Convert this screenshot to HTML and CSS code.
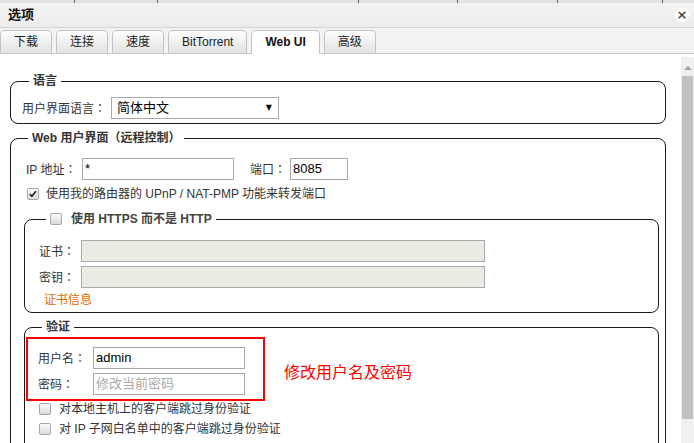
FILE: index.html
```html
<!DOCTYPE html>
<html>
<head>
<meta charset="utf-8">
<title>选项</title>
<link rel="stylesheet" href="styles.css">
</head>
<body>
<div class="window">
  <div class="bgstrip">
    <span class="c1"></span><span class="c2"></span><span class="c3"></span><span class="c4"></span><span class="c5"></span><span class="c6"></span>
  </div>
  <div class="titlebar">
    <span class="title">选项</span>
    <span class="close">×</span>
  </div>
  <div class="tabs">
    <div class="tab">下载</div>
    <div class="tab">连接</div>
    <div class="tab">速度</div>
    <div class="tab">BitTorrent</div>
    <div class="tab active">Web UI</div>
    <div class="tab">高级</div>
  </div>
  <div class="main">
    <div class="content">
      <fieldset class="fs fs-lang">
        <legend>语言</legend>
        <div class="row">
          <span class="lbl w-lang">用户界面语言<span class="colon">：</span></span>
          <div class="select"><span>简体中文</span><span class="arrow">▼</span></div>
        </div>
      </fieldset>

      <fieldset class="fs fs-web">
        <legend>Web 用户界面（远程控制）</legend>
        <div class="row">
          <span class="lbl w-ip">IP 地址<span class="colon">：</span></span>
          <div class="input w-ipin">*</div>
          <span class="lbl w-port">端口<span class="colon">：</span></span>
          <div class="input w-portin">8085</div>
        </div>
        <div class="checkrow upnp">
          <span class="cb checked"><svg viewBox="0 0 12 12" width="10" height="10"><path d="M2.2 6.2 L4.6 8.8 L9.6 2.6" fill="none" stroke="#222" stroke-width="2"/></svg></span>
          <span>使用我的路由器的 UPnP / NAT-PMP 功能来转发端口</span>
        </div>

        <fieldset class="fs fs-inner fs-https">
          <legend><span class="cb"></span><span class="lgtext">使用 HTTPS 而不是 HTTP</span></legend>
          <div class="row">
            <span class="lbl w-cert">证书<span class="colon">：</span></span>
            <div class="input disabled w-certin"></div>
          </div>
          <div class="row gap4">
            <span class="lbl w-cert">密钥<span class="colon">：</span></span>
            <div class="input disabled w-certin"></div>
          </div>
          <div class="certinfo">证书信息</div>
        </fieldset>

        <fieldset class="fs fs-inner fs-auth">
          <legend>验证</legend>
          <div class="authtop">
            <div class="creds">
              <div class="row">
                <span class="lbl w-user">用户名<span class="colon">：</span></span>
                <div class="input w-userin">admin</div>
              </div>
              <div class="row gap4">
                <span class="lbl w-user">密码<span class="colon">：</span></span>
                <div class="input w-userin placeholder">修改当前密码</div>
              </div>
            </div>
            <div class="note">修改用户名及密码</div>
          </div>
          <div class="checkrow bypass1">
            <span class="cb"></span>
            <span>对本地主机上的客户端跳过身份验证</span>
          </div>
          <div class="checkrow bypass2">
            <span class="cb"></span>
            <span>对 IP 子网白名单中的客户端跳过身份验证</span>
          </div>
        </fieldset>
      </fieldset>
    </div>
    <div class="scrollbar">
      <div class="sb-up"></div>
      <div class="sb-thumb"></div>
    </div>
  </div>
</div>
</body>
</html>
```

FILE: styles.css
```css
* { box-sizing: border-box; }
html, body { margin: 0; padding: 0; }
body {
  width: 694px;
  height: 443px;
  overflow: hidden;
  background: #fff;
  font-family: "Liberation Sans", "Noto Sans CJK SC", sans-serif;
  font-size: 12px;
  color: #333;
}
.window { display: flex; flex-direction: column; height: 443px; }

/* remnants of the page behind the dialog */
.bgstrip { height: 3px; background: #e2e2e2; display: flex; }
.bgstrip span { height: 3px; border-right: 1px solid #666; }
.bgstrip .c1 { width: 75px; }
.bgstrip .c2 { width: 83px; }
.bgstrip .c3 { width: 201px; }
.bgstrip .c4 { width: 99px; }
.bgstrip .c5 { width: 100px; }
.bgstrip .c6 { width: 105px; }

.titlebar {
  height: 25px;
  background: linear-gradient(#f4f4f4, #ececec);
  border-bottom: 1px solid #d3d3d3;
  display: flex;
  align-items: center;
  justify-content: space-between;
  padding: 0 5px 0 8px;
}
.title { font-weight: bold; font-size: 13px; color: #111; line-height: 16px; }
.close {
  width: 14px; height: 14px;
  border-radius: 50%;
  background: #fff;
  color: #444;
  font-weight: bold;
  font-size: 13px;
  line-height: 13px;
  text-align: center;
  font-family: "DejaVu Sans", sans-serif;
}

.tabs {
  height: 26px;
  background: #f3f3f3;
  border-bottom: 1px solid #c6c6c6;
  display: flex;
  align-items: flex-end;
  gap: 4px;
}
.tab {
  height: 23px;
  padding: 0 13px;
  border: 1px solid #c3c3c3;
  border-bottom: none;
  border-radius: 5px 5px 0 0;
  background: linear-gradient(#fefefe, #e2e2e2);
  line-height: 22px;
  font-size: 12px;
  color: #222;
}
.tab.active {
  background: #fff;
  font-weight: bold;
  height: 24px;
  margin-bottom: -1px;
  color: #111;
}

.main { flex: 1; display: flex; min-height: 0; }
.content { flex: 1; padding-top: 20px; overflow: hidden; }

.scrollbar {
  width: 13px;
  margin-top: 3px;
  background: #f0f0f0;
  display: flex;
  flex-direction: column;
  align-items: center;
}
.sb-up {
  margin-top: 9px;
  width: 0; height: 0;
  border-left: 4px solid transparent;
  border-right: 4px solid transparent;
  border-bottom: 4px solid #a3a3a3;
}
.sb-thumb {
  margin-top: 6px;
  width: 11px;
  height: 343px;
  background: #c1c1c1;
}

/* fieldsets */
.fs {
  margin: 0 15px 0 10px;
  border: 1px solid #1b1b1b;
  border-radius: 8px;
  min-width: 0;
}
.fs legend {
  padding: 0 4px;
  line-height: 14px;
  font-weight: bold;
  font-size: 12px;
  color: #333;
}
.fs-lang { padding: 9px 10px 4px 11px; }
.fs-lang legend { margin-left: 7px; }

.fs-web { margin-top: 7px; padding: 13px 6px 30px 15px; }
.fs-web legend { margin-left: 2px; }

.fs-inner { margin: 0 0 0 -2px; }
.fs-https { margin-top: 10px; padding: 14px 10px 4px 14px; }
.fs-https legend { margin-left: 7px; display: flex; align-items: center; color: #444; }
.fs-https .lgtext { margin-left: 9px; }

.fs-auth { margin-top: 7px; padding: 13px 10px 30px 13px; }
.fs-auth legend { margin-left: 4px; }

.row { display: flex; align-items: center; height: 22px; }
.gap4 { margin-top: 4px; }
.lbl { line-height: 16px; color: #333; white-space: nowrap; }
.colon { font-family: "Noto Sans CJK JP", sans-serif; }
.w-lang { width: 89px; }
.w-ip { width: 56px; }
.w-port { width: 40px; margin-left: 16px; }
.w-cert { width: 42px; }
.w-user { width: 55px; }

.select {
  width: 168px; height: 22px;
  border: 1px solid #a9a9a9;
  background: #fff;
  display: flex;
  align-items: center;
  justify-content: space-between;
  padding: 0 6px 0 5px;
  font-size: 13px;
  color: #000;
  line-height: 16px;
}
.select .arrow { font-size: 8px; color: #111; font-family: "DejaVu Sans", sans-serif; }

.input {
  height: 22px;
  border: 1px solid #a9a9a9;
  background: #fff;
  padding: 0 2px;
  font-size: 13px;
  line-height: 20px;
  color: #000;
}
.w-ipin { width: 152px; }
.w-portin { width: 58px; }
.w-certin { width: 404px; }
.w-userin { width: 152px; }
.input.disabled { background: #ebebe4; border-color: #a9a9a9; }
.input.placeholder { color: #a9a9a9; font-size: 13px; }

.checkrow { display: flex; align-items: center; height: 16px; line-height: 16px; }
.upnp { margin-top: 6px; margin-left: 1px; }
.upnp .cb { margin-right: 7px; }
.bypass1 { margin-top: 6px; margin-left: 1px; }
.bypass2 { margin-top: 4px; margin-left: 1px; }
.bypass1 .cb, .bypass2 .cb { margin-right: 8px; }

.cb {
  width: 12px; height: 12px;
  border: 1px solid #a7a7a7;
  border-radius: 2px;
  background: linear-gradient(#fbfbfb, #dcdcdc);
  display: inline-flex;
  align-items: center;
  justify-content: center;
  flex: none;
}

.certinfo { margin-top: 4px; line-height: 16px; color: #e06a00; padding-left: 5px; }

.authtop { display: flex; align-items: center; }
.creds { position: relative; }
.creds::before {
  content: "";
  position: absolute;
  top: -10px; left: -12px; right: -20px; bottom: -6px;
  border: 2px solid #ff0000;
  pointer-events: none;
}
.note {
  margin-left: 39px;
  font-family: "Noto Sans CJK SC", sans-serif;
  font-size: 16px;
  line-height: 20px;
  color: #ff0000;
}
```
